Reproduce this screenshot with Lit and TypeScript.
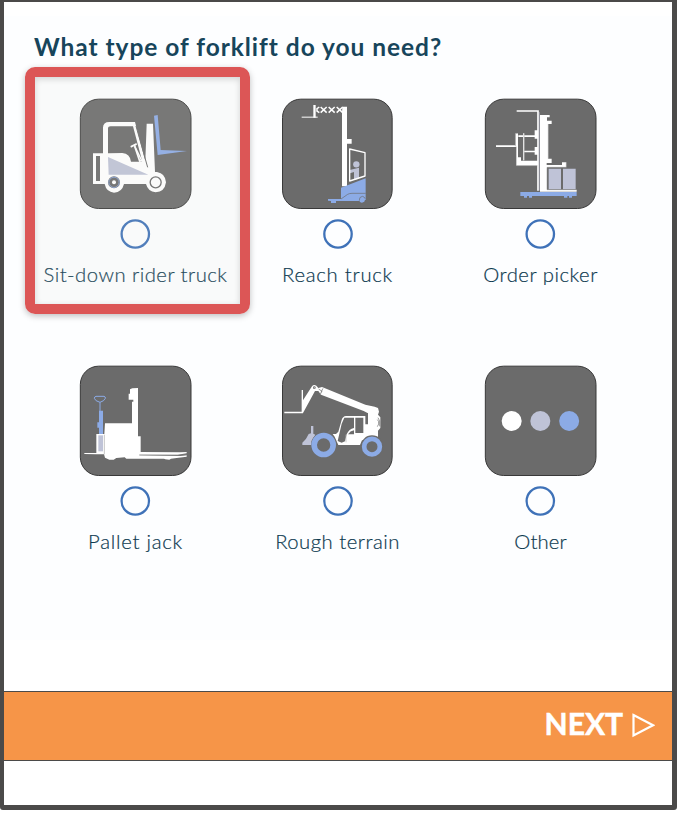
import { LitElement, html, svg, css } from "lit";
import { customElement, property } from "lit/decorators.js";

const W = "#ffffff";
const B = "#8cabe6";
const L = "#bfc3d7";
const G = "#6b6b6b";

const icons: Record<string, unknown> = {
  rider: svg`
    <path fill=${W} d="M69 190H99V113Q99 96 118 96H195L226 213L230 101H249L255 246H261Q286 250 288 277Q284 306 257 307Q234 305 228 282H162Q156 307 132 308Q109 306 104 282H69Z"/>
    <path fill=${G} d="M78 198H90V273H78ZM114 190V116Q114 109 122 109H189L217 215H183Q180 191 157 189Z"/>
    <path fill=${W} d="M181 168L199 159L201 164L196 167L217 211L229 218L232 232L212 211L192 169L183 173Z"/>
    <path fill="none" stroke=${W} stroke-width="5" d="M194 169L209 213L222 211"/>
    <path fill=${L} d="M114 201L235 254H116Z"/>
    <path fill="none" stroke=${G} stroke-width="3" d="M198 108L233 232"/>
    <circle cx="132" cy="277" r="18" fill=${G}/>
    <circle cx="132" cy="277" r="15.500" fill="none" stroke=${B} stroke-width="2.500"/>
    <circle cx="132" cy="277" r="6" fill=${W}/>
    <circle cx="257" cy="277" r="16.500" fill=${W} stroke=${G} stroke-width="4"/>
    <path fill=${B} d="M252 77L263 75L272 180L351 183L263 195Z"/>`,
  reach: svg`
    <path fill="none" stroke=${W} stroke-width="3" d="M89 81.500H137"/>
    <path fill=${W} d="M124 45H131V83H124ZM211 50H225V147H239V161H225V289H210V69Z"/>
    <path fill="none" stroke=${W} stroke-width="4.500" d="M142 51L135 56V63L142 68M146 51L164 68M146 68L164 51M170 51L188 68M170 68L188 51M194 51L212 68M194 68L212 51"/>
    <circle cx="253" cy="223" r="9.500" fill=${L}/>
    <path fill=${L} d="M233 240L261 233V266L246 270V246L234 250Z"/>
    <path fill="none" stroke=${W} stroke-width="4" stroke-linejoin="round" d="M233 177L279 188V258L233 273Z"/>
    <path fill=${B} d="M207 293L281 265V330H279A9 9 0 0 1 262 333H192V339H177V333L168 332V327H207Z"/>
    <path fill="none" stroke=${G} stroke-width="2" d="M207 327L227 313Q232 310 240 310H281M262 332Q261 320 271 319Q278 320 279 326"/>`,
  picker: svg`
    <path fill="none" stroke=${W} stroke-width="5" d="M125 63H189V302M63 168.500H123"/>
    <path fill="none" stroke=${L} stroke-width="1.500" d="M193 66V302"/>
    <path fill=${W} d="M195 75H224V82H216V92H230V102H220V206H230V219H215V225H261V217H274V232H216V299H305V305H195ZM121 130H129V202H138V212H189V227H124V170H121ZM179 121H189V146H179V141H130V136H179ZM179 171H189V194H179V187H147V182H179ZM144 130H148V211H144Z"/>
    <path fill=${L} d="M221 236H258V298H221ZM264 236H302V298H264Z"/>
    <path fill="none" stroke="#8b8b8b" stroke-width="1.500" d="M121 169V130H128M147 130V211M124 227H187M220 102V206M216 232V299H303M217 232H274V217"/>
    <path fill=${B} d="M136 306H305V318H291V323H282V318H277V323H267V318H171V323H162V318H156V323H147V318H136Z"/>`,
  pallet: svg`
    <path fill="none" stroke=${B} stroke-width="3" d="M78 118H102Q107 119 106 124Q103 132 90 136Q75 132 73 124Q73 119 78 118ZM90 136V162"/>
    <path fill=${B} d="M87 161H99V231H87V212H82V196H87Z"/>
    <path fill=${W} d="M79 231H103L105 199H186V134H190V128H176V110H180V97L187 94L204 93V238H212V285L330 286L350 285V289L323 293H208V295L331 297L350 295V299L320 303L303 305L298 308L286 307L282 305H169L164 301L139 303L131 308H118L105 302L102 292H79L43 291V288H79Z"/>
    <path fill=${L} d="M85 235H99V283H85Z"/>
    <path fill="none" stroke="#8a8a8a" stroke-width="1.500" d="M103 292V233M208 294L325 295L350 293"/>`,
  terrain: svg`
    <path fill="none" stroke=${W} stroke-width="4" d="M37 166.500H93M91 99V166"/>
    <path fill=${W} d="M91 133L120 88Q125 81 133 86L139 93L150 90L280 143L308 149L318 153L321 164L318 173L325 181V213L318 221V250H270L264 264H199L188 239L182 231H192L199 224L209 189Q212 178 222 177H288V169L275 162L147 113L139 102L129 102L93 168L90 163Z"/>
    <circle cx="127" cy="92" r="4" fill=${G}/><circle cx="127" cy="92" r="1.500" fill=${W}/>
    <path fill="none" stroke=${G} stroke-width="2" d="M140 96L150 103L145 111M153 94L147 106M316 188Q321 191 320 201L316 209M318 182Q325 189 323 208"/>
    <path fill=${G} d="M217 182H246V213Q231 216 224 232L219 253L209 257L197 252L209 200ZM250 182H274V228H250ZM280 169H288V202H280ZM246 220V232H228Q234 222 246 220Z"/>
    <path fill=${L} d="M117 207H124V230L130 233L119 251L120 264H91V257Q103 248 110 231L117 229Z"/>
    <circle cx="155" cy="264" r="38" fill=${G}/>
    <circle cx="155" cy="264" r="28.500" fill=${G} stroke=${B} stroke-width="17"/>
    <circle cx="300" cy="269" r="34" fill=${G}/>
    <circle cx="300" cy="269" r="23.500" fill=${G} stroke=${B} stroke-width="14"/>
    <path fill="none" stroke="#b5b5b5" stroke-width="2" d="M222 256V233"/>`,
  other: svg`
    <circle cx="110" cy="192" r="30" fill=${W}/>
    <circle cx="196" cy="192" r="30" fill=${L}/>
    <circle cx="282.500" cy="192" r="30" fill=${B}/>`,
};

@customElement("truck-option")
class TruckOption extends LitElement {
  @property() kind = "";
  @property() label = "";
  @property() spacing = "0";
  @property({ type: Boolean }) marked = false;

  static styles = css`
    :host {
      position: relative;
      display: flex;
      flex-direction: column;
      align-items: center;
    }
    .tile { display: block; width: 113px; height: 112px; }
    .radio { display: block; width: 31px; height: 30px; margin-top: 9px; }
    .label {
      margin-top: 11px;
      font-size: 20.3px;
      line-height: 28px;
      font-weight: 300;
      white-space: nowrap;
      color: #0d3a50;
      -webkit-text-stroke: 0.2px #0d3a50;
    }
    .mark {
      position: absolute;
      box-sizing: border-box;
      left: -9px;
      top: -31px;
      width: 225px;
      height: 247px;
      border: 10px solid #dc5656;
      border-radius: 10px;
      background: rgba(223, 217, 209, 0.116);
      box-shadow: 0 2px 6px rgba(0, 0, 0, 0.25), inset 0 2px 6px rgba(0, 0, 0, 0.16);
    }
  `;

  render() {
    const mid = this.kind === "reach" || this.kind === "terrain";
    return html`
      <svg class="tile" viewBox="27 24 339 336">
        <rect x=${mid ? 31.5 : 31} y="27.500" width=${mid ? 329 : 332} height="328" rx="55"
          fill=${G} stroke="#393939" stroke-width="3"/>
        ${icons[this.kind]}
      </svg>
      <svg class="radio" viewBox="0 0 31 30">
        <circle cx=${mid ? 16 : 15.3} cy="15" r="13.700" fill="#fdfeff" stroke="#3f72b8" stroke-width="2.300"/>
      </svg>
      <span class="label" style="letter-spacing:${this.spacing}px">${this.label}</span>
      ${this.marked ? html`<div class="mark"></div>` : ""}
    `;
  }
}

@customElement("app-root")
class AppRoot extends LitElement {
  static styles = css`
    :host {
      display: block;
      height: 815px;
      background: #fff;
      font-family: Lato, "Open Sans", sans-serif;
    }
    .frame {
      box-sizing: border-box;
      width: 677px;
      height: 810px;
      border: solid #4b4a49;
      border-width: 2px 5px 5px 4px;
      border-radius: 0 0 3px 3px;
      display: flex;
      flex-direction: column;
    }
    .panel {
      box-sizing: border-box;
      height: 689px;
      padding: 27px 0 0 30px;
      background: linear-gradient(#fff 14px, #fdfeff 14px, #fdfeff 638px, #fff 638px);
    }
    h1 {
      margin: 0;
      font-size: 24.5px;
      line-height: 36px;
      font-weight: 700;
      letter-spacing: 0.96px;
      color: #17455b;
      white-space: nowrap;
    }
    .grid {
      display: grid;
      grid-template-columns: 203px 201px 205px;
      grid-auto-rows: 267px;
      margin-top: 33px;
    }
    .bar {
      box-sizing: border-box;
      height: 70px;
      border: solid #4b4a49;
      border-width: 1px 0;
      background: #f69548;
      display: flex;
      align-items: center;
      justify-content: flex-end;
      gap: 8px;
      padding-right: 17px;
      color: #fff;
    }
    .next {
      font-size: 30px;
      line-height: 36px;
      font-weight: 700;
      margin-top: -6px;
      -webkit-text-stroke: 0.5px #fff;
    }
    .arrow { width: 24px; height: 26px; margin-top: -2px; }
  `;

  render() {
    return html`
      <div class="frame">
        <div class="panel">
          <h1>What type of forklift do you need?</h1>
          <div class="grid">
            <truck-option kind="rider" label="Sit-down rider truck" spacing="0.48" marked></truck-option>
            <truck-option kind="reach" label="Reach truck" spacing="0.75"></truck-option>
            <truck-option kind="picker" label="Order picker" spacing="0.52"></truck-option>
            <truck-option kind="pallet" label="Pallet jack" spacing="0.75"></truck-option>
            <truck-option kind="terrain" label="Rough terrain" spacing="0.5"></truck-option>
            <truck-option kind="other" label="Other" spacing="0.1"></truck-option>
          </div>
        </div>
        <div class="bar">
          <span class="next">NEXT</span>
          <svg class="arrow" viewBox="0 0 24 26">
            <path d="M2.500 3L22 13.200L2.500 23.400Z" fill="none" stroke="#fff" stroke-width="2.200"/>
          </svg>
        </div>
      </div>
    `;
  }
}
